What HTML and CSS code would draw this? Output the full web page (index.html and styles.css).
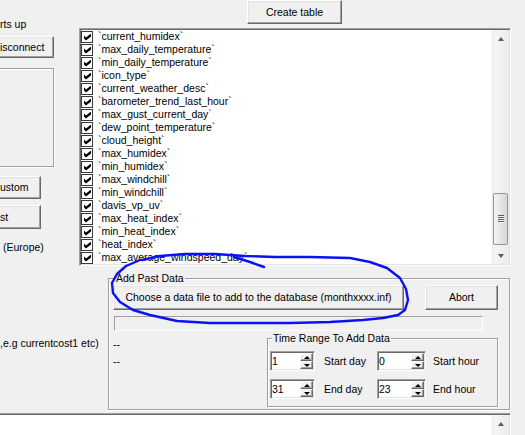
FILE: index.html
```html
<!DOCTYPE html>
<html>
<head>
<meta charset="utf-8">
<title>Add Past Data</title>
<link rel="stylesheet" href="styles.css">
</head>
<body>
<div class="window">
  <div class="top">
    <div class="leftcol">
      <div class="lbl startup">rts up</div>
      <div class="btn disconnect">isconnect</div>
      <div class="panel"></div>
      <div class="btn custom">ustom</div>
      <div class="btn st">st</div>
      <div class="lbl europe">(Europe)</div>
      <div class="lbl eg">,e.g currentcost1 etc)</div>
    </div>
    <div class="rightcol">
      <div class="toolbar">
        <div class="btn create">Create table</div>
      </div>
      <div class="listbox">
        <div class="items">
          <div class="item"><span class="cb"></span><span>`current_humidex`</span></div>
          <div class="item"><span class="cb"></span><span>`max_daily_temperature`</span></div>
          <div class="item"><span class="cb"></span><span>`min_daily_temperature`</span></div>
          <div class="item"><span class="cb"></span><span>`icon_type`</span></div>
          <div class="item"><span class="cb"></span><span>`current_weather_desc`</span></div>
          <div class="item"><span class="cb"></span><span>`barometer_trend_last_hour`</span></div>
          <div class="item"><span class="cb"></span><span>`max_gust_current_day`</span></div>
          <div class="item"><span class="cb"></span><span>`dew_point_temperature`</span></div>
          <div class="item"><span class="cb"></span><span>`cloud_height`</span></div>
          <div class="item"><span class="cb"></span><span>`max_humidex`</span></div>
          <div class="item"><span class="cb"></span><span>`min_humidex`</span></div>
          <div class="item"><span class="cb"></span><span>`max_windchill`</span></div>
          <div class="item"><span class="cb"></span><span>`min_windchill`</span></div>
          <div class="item"><span class="cb"></span><span>`davis_vp_uv`</span></div>
          <div class="item"><span class="cb"></span><span>`max_heat_index`</span></div>
          <div class="item"><span class="cb"></span><span>`min_heat_index`</span></div>
          <div class="item"><span class="cb"></span><span>`heat_index`</span></div>
          <div class="item"><span class="cb"></span><span>`max_average_windspeed_day`</span></div>
        </div>
        <div class="vscroll">
          <div class="sb-btn up"></div>
          <div class="sb-track"><div class="thumb"></div></div>
          <div class="sb-btn down"></div>
        </div>
      </div>
      <div class="group addpast">
        <div class="legend">Add Past Data</div>
        <div class="row1">
          <div class="btn choose">Choose a data file to add to the database (monthxxxx.inf)</div>
          <div class="btn abort">Abort</div>
        </div>
        <div class="progress"></div>
        <div class="row3">
          <div class="dashes">
            <div class="lbl">--</div>
            <div class="lbl dash2">--</div>
          </div>
          <div class="group timerange">
            <div class="legend">Time Range To Add Data</div>
            <div class="tgrid">
              <div class="spin"><span class="val">1</span><span class="spinbtn"><i class="su"></i><i class="sd"></i></span></div>
              <div class="tlbl l1">Start day</div>
              <div class="spin"><span class="val">0</span><span class="spinbtn"><i class="su"></i><i class="sd"></i></span></div>
              <div class="tlbl l2">Start hour</div>
              <div class="spin"><span class="val">31</span><span class="spinbtn"><i class="su"></i><i class="sd"></i></span></div>
              <div class="tlbl l1">End day</div>
              <div class="spin"><span class="val">23</span><span class="spinbtn"><i class="su"></i><i class="sd"></i></span></div>
              <div class="tlbl l2">End hour</div>
            </div>
          </div>
        </div>
      </div>
    </div>
  </div>
  <div class="memo">
    <div class="memo-body"></div>
    <div class="vscroll">
      <div class="sb-btn up"></div>
      <div class="sb-track"></div>
    </div>
  </div>
  <svg class="ink" width="525" height="435" viewBox="0 0 525 435">
    <path d="M142 260 L160 256 L185 254 L215 254 L245 256 L275 257 L310 257 L350 258 L370 262 L387 268 L400 278 L406 289 L408 300 L405 310 L398 315 L383 318 L363 320 L330 322 L290 323 L250 323 L210 323 L177 321 L150 315 L133 310 L120 302 L113 293 L112 283 L117 274 L126 266 L140 260" />
    <path d="M234 257 L250 262 L264 267" />
  </svg>
</div>
</body>
</html>
```
FILE: styles.css
```css
* { box-sizing: border-box; }
html, body { margin: 0; padding: 0; }
body {
  width: 525px;
  height: 435px;
  overflow: hidden;
  background: #f0f0f0;
  font-family: "Liberation Sans", Arial, sans-serif;
  font-size: 10.5px;
  color: #000;
}
.window { position: relative; width: 525px; height: 435px; }
.top { display: flex; height: 413px; }

.lbl { line-height: 13px; white-space: nowrap; }

.btn {
  display: flex;
  align-items: center;
  justify-content: center;
  background: #f0f0f0;
  border: 1px solid;
  border-color: #fff #696969 #696969 #fff;
  box-shadow: inset -1px -1px #a0a0a0, inset 1px 1px #e3e3e3;
  white-space: nowrap;
  line-height: 13px;
  flex: none;
}

/* left column */
.leftcol {
  width: 79px;
  flex: none;
  display: flex;
  flex-direction: column;
  align-items: flex-start;
}
.leftcol .btn { justify-content: flex-start; margin-left: -3px; padding-left: 2px; }
.startup { margin-top: 18px; }
.disconnect { margin-top: 5px; width: 57px; height: 22px; }
.panel {
  margin-top: 10px;
  margin-left: -3px;
  width: 57px;
  height: 99px;
  border: 1px solid #a0a0a0;
  box-shadow: inset 1px 1px #fff, 1px 1px #fff;
}
.custom { margin-top: 9px; width: 44px; height: 23px; }
.st { margin-top: 6px; width: 44px; height: 24px; }
.europe { margin-top: 12px; padding-left: 3px; }
.eg { margin-top: 83px; }

/* right column */
.rightcol { width: 432px; flex: none; display: flex; flex-direction: column; }
.toolbar { height: 28px; display: flex; }
.create { margin-left: 168px; width: 95px; height: 24px; }

.sunken {
  border: 1px solid;
}
.listbox {
  height: 238px;
  display: flex;
  background: #fff;
  border: 1px solid;
  border-color: #a0a0a0 #fff #fff #a0a0a0;
  box-shadow: inset 1px 1px #696969, inset -1px -1px #e3e3e3;
  padding: 1px;
  flex: none;
}
.items { flex: 1; overflow: hidden; }
.item {
  height: 13px;
  display: flex;
  align-items: center;
  gap: 5px;
  line-height: 13px;
  white-space: nowrap;
}
.cb {
  width: 12px;
  height: 12px;
  border: 1px solid #3a3a3a;
  background: #fff;
  position: relative;
  flex: none;
}
.cb::after {
  content: "";
  position: absolute;
  left: 2px;
  top: 2px;
  width: 7px;
  height: 7px;
  background: #000;
  clip-path: polygon(0 2px, 2px 4px, 7px 0, 7px 3px, 2px 7px, 0 5px);
}

/* scrollbar */
.vscroll {
  width: 17px;
  flex: none;
  display: flex;
  flex-direction: column;
  background: linear-gradient(90deg, #e6e6e6 0, #f6f6f6 2px, #f0f0f0 60%, #ebebeb 100%);
}
.sb-btn { height: 17px; flex: none; display: flex; align-items: center; justify-content: center; }
.sb-btn.up::after {
  content: "";
  border-left: 3.5px solid transparent;
  border-right: 3.5px solid transparent;
  border-bottom: 4px solid #5a5a5a;
}
.sb-btn.down::after {
  content: "";
  border-left: 3.5px solid transparent;
  border-right: 3.5px solid transparent;
  border-top: 4px solid #5a5a5a;
}
.sb-track { flex: 1; display: flex; flex-direction: column; }
.thumb {
  margin: 146px 1px 0 1px;
  height: 52px;
  border: 1px solid #969696;
  border-radius: 2px;
  background: linear-gradient(90deg, #f4f4f4, #e6e6e6 50%, #d6d6d6);
  display: flex;
  align-items: center;
  justify-content: center;
}
.thumb::after {
  content: "";
  width: 6px;
  height: 8px;
  background: repeating-linear-gradient(180deg, #5e5e5e 0 1px, #f4f4f4 1px 2px);
}

/* group boxes */
.group {
  position: relative;
  border: 1px solid #a0a0a0;
  box-shadow: inset 1px 1px #fff, 1px 1px #fff;
}
.legend {
  position: absolute;
  top: -7px;
  left: 6px;
  padding: 0 1px;
  background: #f0f0f0;
  line-height: 13px;
  white-space: nowrap;
}
.addpast {
  margin: 12px 0 0 29px;
  width: 402px;
  height: 132px;
  padding: 6px 0 0 4px;
  flex: none;
}
.row1 { display: flex; gap: 21px; }
.choose { width: 291px; height: 25px; }
.abort { width: 73px; height: 25px; }
.progress {
  margin: 6px 0 0 1px;
  width: 369px;
  height: 15px;
  border: 1px solid;
  border-color: #a0a0a0 #fff #fff #a0a0a0;
}
.row3 { display: flex; margin-top: 7px; }
.dashes { width: 154px; flex: none; }
.dash2 { margin-top: 4px; }
.timerange {
  width: 231px;
  height: 69px;
  padding: 12px 0 0 2px;
  flex: none;
}
.timerange .legend { left: 4px; top: -7px; }
.tgrid {
  display: grid;
  grid-template-columns: 45px 62px 49px auto;
  grid-auto-rows: 20px;
  row-gap: 8px;
  align-items: center;
}
.tlbl { white-space: nowrap; line-height: 13px; }
.l1 { padding-left: 9px; }
.l2 { padding-left: 7px; }
.spin {
  height: 20px;
  display: flex;
  background: #fff;
  border: 1px solid;
  border-color: #a0a0a0 #fff #fff #a0a0a0;
  box-shadow: inset 1px 1px #696969, inset -1px -1px #e3e3e3;
  padding: 1px;
}
.val { flex: 1; line-height: 16px; padding-left: 0; }
.spinbtn { width: 13px; display: flex; flex-direction: column; flex: none; }
.spinbtn i {
  flex: 1;
  display: flex;
  align-items: center;
  justify-content: center;
  background: #f0f0f0;
  border: 1px solid;
  border-color: #fff #696969 #696969 #fff;
  box-shadow: inset -1px -1px #a0a0a0;
}
.spinbtn .su::after {
  content: "";
  border-left: 3px solid transparent;
  border-right: 3px solid transparent;
  border-bottom: 3px solid #000;
}
.spinbtn .sd::after {
  content: "";
  border-left: 3px solid transparent;
  border-right: 3px solid transparent;
  border-top: 3px solid #000;
}

/* bottom memo */
.memo {
  margin-left: -2px;
  width: 513px;
  height: 26px;
  display: flex;
  background: #fff;
  border: 1px solid;
  border-color: #a0a0a0 #fff #fff #a0a0a0;
  box-shadow: inset 1px 1px #696969, inset -1px -1px #e3e3e3;
  padding: 1px;
}
.memo-body { flex: 1; }

/* annotation ink */
.ink {
  position: absolute;
  left: 0;
  top: 0;
  pointer-events: none;
}
.ink path {
  fill: none;
  stroke: #0a12f2;
  stroke-width: 2.4;
  stroke-linecap: round;
  stroke-linejoin: round;
}
```
